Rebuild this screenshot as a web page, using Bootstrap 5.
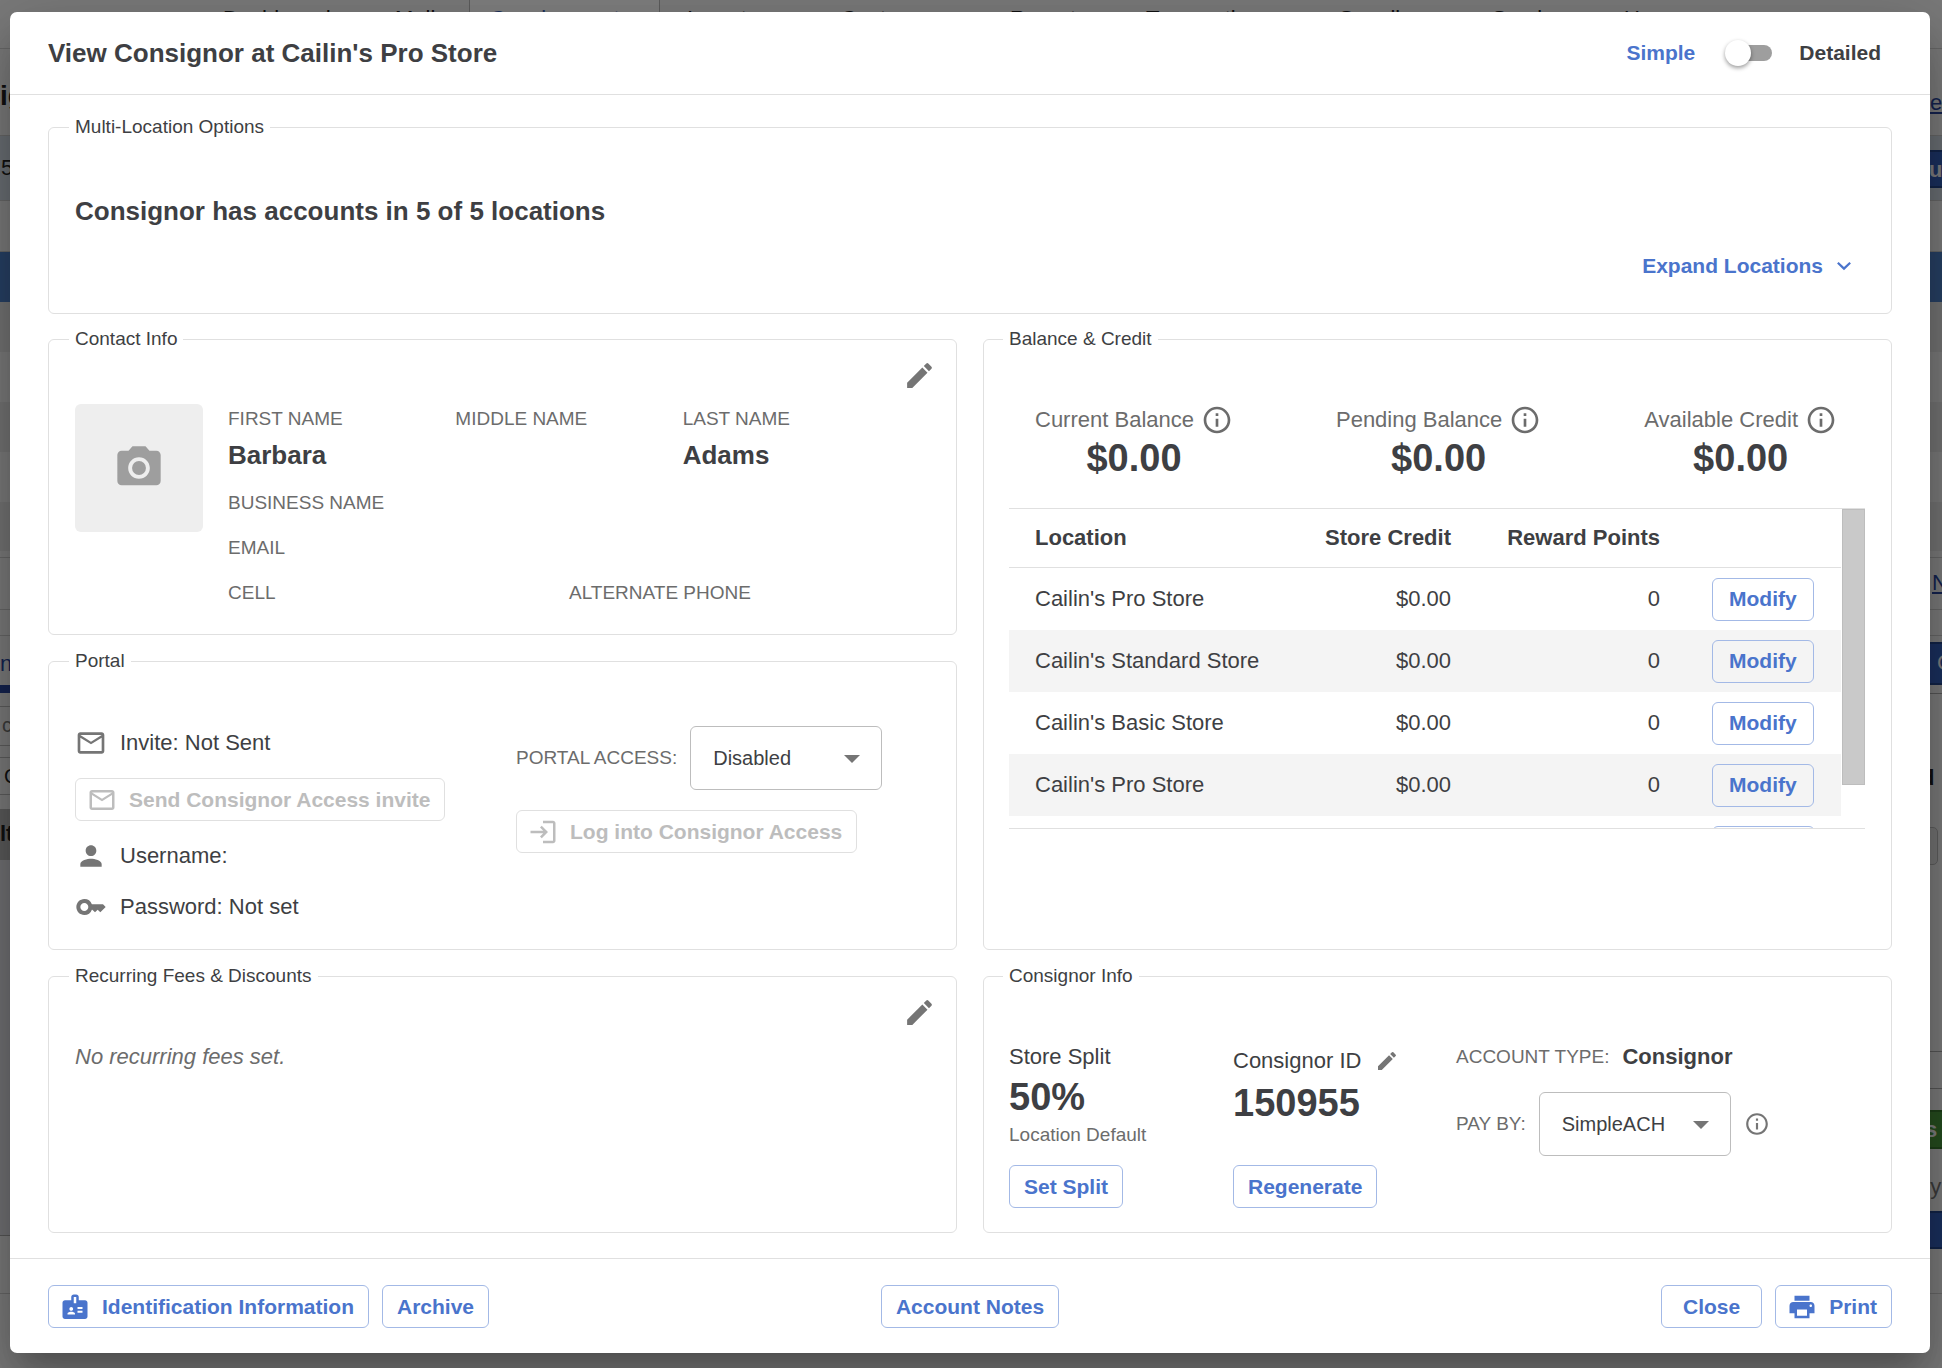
<!DOCTYPE html>
<html lang="en">
<head>
<meta charset="utf-8">
<meta name="viewport" content="width=device-width, initial-scale=1">
<title>View Consignor</title>
<link rel="stylesheet" href="https://cdn.jsdelivr.net/npm/bootstrap@5.3.0/dist/css/bootstrap.min.css">
<style>
  :root { --ink: #3e3f43; --soft: #6c6c6c; --icon: #757575; --blue: #4a74cc; --line: #e0e0e0; }
  body { font-family: "Liberation Sans", Arial, sans-serif; font-size: 22px; line-height: 26px; color: var(--ink); background: #f4f4f4; min-height: 100vh; overflow: hidden; }
  svg { fill: currentColor; flex: none; display: block; }

  /* page underneath the dialog */
  .under { position: absolute; inset: 0; overflow: hidden; color: #222; }
  .under-nav { height: 49px; border-bottom: 1px solid #d0d0d0; }
  .under-nav a { color: #222; text-decoration: none; top: 7px; line-height: 24px; }
  .under-nav .tab-on { position: absolute; top: 0; left: 469px; width: 191px; height: 48px; background: #fff; border: 1px solid #bbb; border-top: 0; }
  .under-nav a.on { color: #3d62b8; }
  .band { border-bottom: 1px solid #ccc; }
  .bit { position: absolute; white-space: nowrap; }
  .under-btn { background: #3560bd; border: 2px solid #27498f; width: 60px; }
  .veil { position: absolute; inset: 0; background: rgba(0,0,0,.5); }

  .dialog { position: relative; margin: 12px 12px 15px 10px; background: #fff; border-radius: 7px; box-shadow: 0 18px 24px -11px rgba(0,0,0,.2), 0 38px 60px 5px rgba(0,0,0,.14), 0 14px 74px 13px rgba(0,0,0,.12); }
  .dialog-head { height: 83px; padding: 0 49px 0 38px; border-bottom: 1px solid var(--line); }
  .dialog-head h1, .headline { font-size: 26px; line-height: 32px; font-weight: 700; }
  .dialog-main { padding: 20px 38px 25px; }
  .dialog-foot { padding: 26px 38px 25px; border-top: 1px solid var(--line); }

  .mode { font-size: 21px; font-weight: 700; }
  .mode-on { color: var(--blue); }
  .switch { appearance: none; width: 48px; height: 26px; margin: 0 26px 0 30px; position: relative; background: none; border: 0; }
  .switch::before { content: ""; position: absolute; left: 4px; right: 1px; top: 5px; height: 16px; border-radius: 8px; background: #9e9e9e; }
  .switch::after { content: ""; position: absolute; left: 0; top: 0; width: 26px; height: 26px; border-radius: 50%; background: #fff; box-shadow: 0 2px 4px rgba(0,0,0,.4); }

  .panel { border: 1px solid var(--line); border-radius: 6px; padding: 0 26px; margin: 0; min-width: 0; position: relative; }
  .panel > legend { float: none; width: auto; font-size: 19px; line-height: 24px; margin: 0 0 0 -6px; padding: 0 6px; }
  .panel-r { padding-left: 25px; }
  .locations { height: 199px; }
  .headline { margin: 56px 0 17px; }
  .duo { display: grid; grid-template-columns: minmax(0, 1fr) minmax(0, 1fr); gap: 14px 26px; margin-top: 13px; }
  .stack { display: grid; gap: 14px; }
  .contact { min-height: 308px; }
  .portal { min-height: 301px; }
  .low { min-height: 269px; }
  .inset-top { margin-top: 53px; }

  .btn-line { --bs-btn-color: var(--blue); --bs-btn-border-color: #a3b9e6; --bs-btn-hover-color: #fff; --bs-btn-hover-bg: var(--blue); --bs-btn-disabled-color: #bdbdbd; --bs-btn-disabled-border-color: #e0e0e0; --bs-btn-disabled-opacity: 1;
    --bs-btn-font-size: 21px; --bs-btn-line-height: 26px; --bs-btn-padding-x: 14px; --bs-btn-padding-y: 8px; --bs-btn-border-radius: 6px; font-weight: 700; height: 43px; display: inline-flex; align-items: center; white-space: nowrap; }
  .btn-wide { --bs-btn-padding-x: 21px; }
  .btn-mod { --bs-btn-padding-x: 16px; }
  .btn-expand { --bs-btn-padding-x: 8px; border: 0; }
  .btn-icon { padding-left: 11px; gap: 12px; }
  .bare { border: 0; background: none; padding: 0; color: var(--icon); }
  .corner { position: absolute; right: 20px; top: 8px; }
  .tag { font-size: 19px; color: var(--soft); text-transform: uppercase; }
  .tag-row { margin-top: 19px; }
  .big { font-size: 38px; line-height: 44px; font-weight: 700; color: var(--ink); }
  .who { font-size: 26px; line-height: 31px; font-weight: 700; }
  .names { padding: 2px 20px 0 0; }
  .photo { width: 128px; height: 128px; background: #eee; color: #9e9e9e; border-radius: 6px; flex: none; }
  .state { display: flex; align-items: center; gap: 13px; height: 34px; }
  .state svg { color: var(--icon); }
  .pick { appearance: none; width: 192px; height: 64px; border: 1px solid #bdbdbd; border-radius: 6px; font-size: 20px; color: var(--ink); padding: 0 22px; background: none; }
  .pick-box { position: relative; }
  .pick-box svg { position: absolute; right: 22px; top: 29px; color: var(--icon); pointer-events: none; }

  .balances { padding: 0 28px 0 26px; color: var(--soft); }
  .balances .cap { display: flex; align-items: center; gap: 7px; height: 32px; }
  .credit-list { height: 321px; margin-top: 28px; overflow: hidden; border-top: 1px solid var(--line); border-bottom: 1px solid var(--line); display: flex; }
  .credit-list table { flex: 1; height: max-content; margin: 0; color: var(--ink); border-collapse: separate; border-spacing: 0; table-layout: fixed; }
  .credit-list th, .credit-list td { padding: 0 26px; }
  .credit-list thead th { height: 59px; border-bottom: 1px solid var(--line); }
  .credit-list td { height: 62px; }
  .credit-list td .btn { vertical-align: middle; }
  .credit-list tbody tr:nth-child(even) { background: #f4f4f4; }
  .bar-track { width: 24px; padding-left: 1px; flex: none; }
  .bar-thumb { height: 276px; background: #c9c9c9; border: 1px solid #bdbdbd; }
  .info-cols { display: grid; grid-template-columns: 224px 223px 1fr; margin-top: 56px; }
</style>
</head>
<body>
<div class="under" aria-hidden="true">
  <div class="under-nav">
    <span class="tab-on"></span>
    <a class="bit" style="left:223px">Dashboard</a><a class="bit" style="left:395px">Mall</a><a class="bit on" style="left:490px">Consignment</a><a class="bit" style="left:687px">Inventory</a><a class="bit" style="left:841px">Customers</a><a class="bit" style="left:1010px">Reports</a><a class="bit" style="left:1146px">Transactions</a><a class="bit" style="left:1339px">Supplies</a><a class="bit" style="left:1492px">Services</a><a class="bit" style="left:1624px">Users</a>
  </div>
  <div class="band" style="height:87px"></div>
  <div class="band" style="height:65px;background:#d3dce6"></div>
  <div class="band" style="height:51px"></div>
  <div style="height:50px;background:#4f80c9"></div>
  <div style="height:50px;background:#e6e6e6"></div>
  <div style="height:50px"></div>
  <div style="height:50px;background:#e6e6e6"></div>
  <div style="height:50px"></div>
  <div style="height:49px;background:#e6e6e6"></div>
  <div class="band" style="height:7px"></div>
  <div class="band" style="height:52px"></div>
  <div class="band" style="height:26px"></div>
  <div style="height:601px"></div>
  <div class="band" style="height:57px"></div>
  <b class="bit" style="left:0;top:83px;font-size:28px">ig</b>
  <span class="bit" style="left:1px;top:155px">5</span>
  <span class="bit" style="left:0;top:651px;color:#2a479f">n</span>
  <div class="bit" style="left:0;top:685px;width:30px;height:8px;background:#2a479f"></div>
  <div class="bit" style="left:0;top:706px;width:30px;height:40px;border:1px solid #bbb;border-left:0"></div>
  <span class="bit" style="left:2px;top:712px;font-size:20px;color:#777">c</span>
  <div class="bit" style="left:0;top:757px;width:30px;height:38px;border:1px solid #bbb;border-left:0"></div>
  <span class="bit" style="left:4px;top:763px;font-size:20px">C</span>
  <div class="bit" style="left:0;top:809px;width:30px;height:51px;background:#b5b5b5"></div>
  <div class="bit" style="left:0;top:860px;width:30px;height:376px;background:#e0e0e6;border-bottom:1px solid #aaa"></div>
  <b class="bit" style="left:0;top:821px">lt</b>
  <u class="bit" style="left:1930px;top:90px;color:#2a479f">e</u>
  <div class="bit under-btn" style="left:1900px;top:150px;height:38px"></div>
  <b class="bit text-light" style="left:1929px;top:157px">u</b>
  <u class="bit" style="left:1932px;top:570px;color:#2a479f">N</u>
  <div class="bit under-btn" style="left:1900px;top:642px;height:43px"></div>
  <span class="bit text-light" style="left:1937px;top:650px">C</span>
  <div class="bit" style="left:1900px;top:693px;width:60px;height:1px;background:#aaa"></div>
  <b class="bit" style="left:1921px;top:765px">d</b>
  <div class="bit" style="left:1900px;top:827px;width:38px;height:38px;border:1px solid #bbb;border-radius:5px;background:#e6e6e6"></div>
  <div class="bit" style="left:1900px;top:1051px;width:60px;height:38px;border:1px solid #aaa"></div>
  <div class="bit" style="left:1900px;top:1110px;width:60px;height:39px;background:#4c9a3e;border:2px solid #3b7a30"></div>
  <b class="bit text-light" style="left:1925px;top:1117px">s</b>
  <span class="bit" style="left:1923px;top:1174px;color:#777">ry</span>
  <div class="bit under-btn" style="left:1900px;top:1211px;height:38px"></div>
</div>
<div class="veil"></div>

<svg width="0" height="0" class="position-absolute">
  <symbol id="pen" viewBox="0 0 24 24"><path d="M3 17.250V21h3.750L17.810 9.940l-3.750-3.750L3 17.250zM20.710 7.040c.39-.39.39-1.020 0-1.410l-2.340-2.340a1 1 0 0 0-1.410 0l-1.830 1.830 3.750 3.750 1.830-1.830z"/></symbol>
  <symbol id="about" viewBox="0 0 24 24"><path d="M11 7h2v2h-2zm0 4h2v6h-2zm1-9C6.480 2 2 6.480 2 12s4.480 10 10 10 10-4.480 10-10S17.520 2 12 2zm0 18c-4.410 0-8-3.590-8-8s3.590-8 8-8 8 3.590 8 8-3.590 8-8 8z"/></symbol>
  <symbol id="mail" viewBox="0 0 24 24"><path d="M20 4H4c-1.100 0-2 .9-2 2v12c0 1.100.9 2 2 2h16c1.100 0 2-.9 2-2V6c0-1.100-.9-2-2-2zm0 14H4V8l8 5 8-5v10zm-8-7L4 6h16l-8 5z"/></symbol>
</svg>

<main class="dialog" role="dialog" aria-labelledby="ttl">
  <header class="dialog-head d-flex align-items-center">
    <h1 id="ttl" class="m-0 me-auto">View Consignor at Cailin's Pro Store</h1>
    <label class="mode d-flex align-items-center"><span class="mode-on">Simple</span><input type="checkbox" role="switch" class="switch" aria-label="Detailed view"><span>Detailed</span></label>
  </header>

  <div class="dialog-main">
    <fieldset class="panel locations">
      <legend>Multi-Location Options</legend>
      <h2 class="headline">Consignor has accounts in 5 of 5 locations</h2>
      <div class="d-flex justify-content-end">
        <button type="button" class="btn btn-line btn-expand">Expand Locations
          <svg class="ms-2" width="26" height="26" viewBox="0 0 24 24"><path d="M17 8.200 12 13 7 8.200 5.600 9.600l6.400 6.400 6.400-6.400z"/></svg></button>
      </div>
    </fieldset>

    <div class="duo">
      <div class="stack">
        <fieldset class="panel contact">
          <legend>Contact Info</legend>
          <button type="button" class="bare corner" aria-label="Edit contact info"><svg width="33" height="33"><use href="#pen"/></svg></button>
          <div class="d-flex inset-top" style="gap:25px">
            <div class="photo d-flex align-items-center justify-content-center"><svg width="52" height="52" viewBox="0 0 24 24"><circle cx="12" cy="12" r="3.2"/><path d="M9 2 7.170 4H4c-1.100 0-2 .9-2 2v12c0 1.100.9 2 2 2h16c1.100 0 2-.9 2-2V6c0-1.100-.9-2-2-2h-3.170L15 2H9zm3 15c-2.760 0-5-2.240-5-5s2.240-5 5-5 5 2.240 5 5-2.240 5-5 5z"/></svg></div>
            <div class="flex-grow-1 names">
              <div class="row g-0">
                <div class="col-4"><div class="tag">First Name</div><div class="who mt-2">Barbara</div></div>
                <div class="col-4"><div class="tag">Middle Name</div></div>
                <div class="col-4"><div class="tag">Last Name</div><div class="who mt-2">Adams</div></div>
              </div>
              <div class="tag tag-row">Business Name</div>
              <div class="tag tag-row">Email</div>
              <div class="row g-0 tag-row">
                <div class="col-6 tag">Cell</div><div class="col-6 tag">Alternate Phone</div>
              </div>
            </div>
          </div>
        </fieldset>

        <fieldset class="panel portal">
          <legend>Portal</legend>
          <div class="d-flex inset-top">
            <div style="width:441px">
              <div class="state"><svg width="32" height="32"><use href="#mail"/></svg>Invite: Not Sent</div>
              <button type="button" class="btn btn-line btn-icon" style="margin:18px 0" disabled><svg width="30" height="30"><use href="#mail"/></svg><span>Send Consignor Access invite</span></button>
              <div class="state"><svg width="32" height="32" viewBox="0 0 24 24"><path d="M12 12c2.210 0 4-1.790 4-4s-1.790-4-4-4-4 1.790-4 4 1.790 4 4 4zm0 2c-2.670 0-8 1.340-8 4v2h16v-2c0-2.660-5.330-4-8-4z"/></svg>Username:</div>
              <div class="state" style="margin-top:17px"><svg width="32" height="32" viewBox="0 0 24 24"><path d="M21 10h-8.350A5.990 5.990 0 0 0 7 6c-3.310 0-6 2.690-6 6s2.690 6 6 6a5.990 5.990 0 0 0 5.650-4H13l2 2 2-2 2 2 4-4.040L21 10zM7 15c-1.650 0-3-1.350-3-3s1.350-3 3-3 3 1.350 3 3-1.350 3-3 3z"/></svg>Password: Not set</div>
            </div>
            <div>
              <div class="d-flex align-items-center" style="gap:13px"><label class="tag" for="acc">Portal Access:</label>
                <div class="pick-box"><select id="acc" class="pick"><option>Disabled</option></select><svg width="16" height="8" viewBox="0 0 16 8"><path d="M0 0h16L8 8z"/></svg></div></div>
              <button type="button" class="btn btn-line btn-icon" style="margin-top:20px" disabled><svg width="30" height="30" viewBox="0 0 24 24"><path d="M11 7 9.600 8.400l2.600 2.600H2v2h10.200l-2.600 2.600L11 17l5-5-5-5zm9 12h-8v2h8c1.100 0 2-.9 2-2V5c0-1.100-.9-2-2-2h-8v2h8v14z"/></svg><span>Log into Consignor Access</span></button>
            </div>
          </div>
        </fieldset>
      </div>

      <fieldset class="panel panel-r">
        <legend>Balance &amp; Credit</legend>
        <div class="d-flex justify-content-between balances inset-top">
          <div class="text-center"><div class="cap">Current Balance<svg width="32" height="32"><use href="#about"/></svg></div><div class="big">$0.00</div></div>
          <div class="text-center"><div class="cap">Pending Balance<svg width="32" height="32"><use href="#about"/></svg></div><div class="big">$0.00</div></div>
          <div class="text-center"><div class="cap">Available Credit<svg width="32" height="32"><use href="#about"/></svg></div><div class="big">$0.00</div></div>
        </div>
        <div class="credit-list">
          <table>
            <colgroup><col><col style="width:190px"><col style="width:209px"><col style="width:155px"></colgroup>
            <thead><tr><th>Location</th><th class="text-end text-nowrap">Store Credit</th><th class="text-end text-nowrap">Reward Points</th><th></th></tr></thead>
            <tbody>
              <tr><td>Cailin's Pro Store</td><td class="text-end">$0.00</td><td class="text-end">0</td><td><button type="button" class="btn btn-line btn-mod">Modify</button></td></tr>
              <tr><td>Cailin's Standard Store</td><td class="text-end">$0.00</td><td class="text-end">0</td><td><button type="button" class="btn btn-line btn-mod">Modify</button></td></tr>
              <tr><td>Cailin's Basic Store</td><td class="text-end">$0.00</td><td class="text-end">0</td><td><button type="button" class="btn btn-line btn-mod">Modify</button></td></tr>
              <tr><td>Cailin's Pro Store</td><td class="text-end">$0.00</td><td class="text-end">0</td><td><button type="button" class="btn btn-line btn-mod">Modify</button></td></tr>
              <tr><td></td><td></td><td></td><td><button type="button" class="btn btn-line btn-mod w-100" aria-label="Modify"></button></td></tr>
            </tbody>
          </table>
          <div class="bar-track"><div class="bar-thumb"></div></div>
        </div>
      </fieldset>

      <fieldset class="panel low">
        <legend>Recurring Fees &amp; Discounts</legend>
        <button type="button" class="bare corner" aria-label="Edit recurring fees"><svg width="33" height="33"><use href="#pen"/></svg></button>
        <p class="fst-italic m-0" style="padding-top:56px;color:var(--soft)">No recurring fees set.</p>
      </fieldset>

      <fieldset class="panel panel-r low">
        <legend>Consignor Info</legend>
        <div class="info-cols">
          <div class="d-flex flex-column align-items-start">
            <div>Store Split</div><div class="big" style="margin-top:5px">50%</div>
            <div style="font-size:19px;color:var(--soft);margin:3px 0 17px">Location Default</div>
            <button type="button" class="btn btn-line">Set Split</button>
          </div>
          <div class="d-flex flex-column align-items-start">
            <div class="d-flex align-items-center" style="height:34px;gap:14px">Consignor ID <button type="button" class="bare" aria-label="Edit consignor ID"><svg width="24" height="24"><use href="#pen"/></svg></button></div>
            <div class="big" style="margin-top:3px">150955</div>
            <button type="button" class="btn btn-line mt-auto">Regenerate</button>
          </div>
          <div>
            <div class="d-flex align-items-center" style="gap:13px"><span class="tag">Account Type:</span><b>Consignor</b></div>
            <div class="d-flex align-items-center" style="gap:13px;margin-top:22px"><label class="tag" for="pay">Pay By:</label>
              <div class="pick-box"><select id="pay" class="pick"><option>SimpleACH</option></select><svg width="16" height="8" viewBox="0 0 16 8"><path d="M0 0h16L8 8z"/></svg></div>
              <svg width="26" height="26" style="color:var(--icon)"><use href="#about"/></svg></div>
          </div>
        </div>
      </fieldset>
    </div>
  </div>

  <footer class="dialog-foot row g-0">
    <div class="col d-flex" style="gap:13px">
      <button type="button" class="btn btn-line btn-icon"><svg width="30" height="30" viewBox="0 0 24 24"><path fill-rule="evenodd" d="M20 6.500h-5V4c0-1.100-.9-2-2-2h-2c-1.100 0-2 .9-2 2v2.500H4c-1.100 0-2 .9-2 2V19.500c0 1.100.9 2 2 2h16c1.100 0 2-.9 2-2V8.500c0-1.100-.9-2-2-2zM9 12c.83 0 1.500.67 1.500 1.500S9.830 15 9 15s-1.500-.67-1.500-1.500S8.170 12 9 12zm3 6H6v-.75c0-1 2-1.500 3-1.500s3 .5 3 1.500V18zm1-9h-2V4h2v5zm5 7.500h-4V15h4v1.500zm0-3h-4V12h4v1.500z"/></svg><span>Identification Information</span></button>
      <button type="button" class="btn btn-line">Archive</button>
    </div>
    <div class="col-auto"><button type="button" class="btn btn-line">Account Notes</button></div>
    <div class="col d-flex justify-content-end" style="gap:13px">
      <button type="button" class="btn btn-line btn-wide">Close</button>
      <button type="button" class="btn btn-line btn-icon"><svg width="30" height="30" viewBox="0 0 24 24"><path d="M19 8H5c-1.660 0-3 1.340-3 3v6h4v4h12v-4h4v-6c0-1.660-1.340-3-3-3zm-3 11H8v-5h8v5zm3-7c-.55 0-1-.45-1-1s.45-1 1-1 1 .45 1 1-.45 1-1 1zm-1-9H6v4h12V3z"/></svg><span>Print</span></button>
    </div>
  </footer>
</main>
<script src="https://cdn.jsdelivr.net/npm/bootstrap@5.3.0/dist/js/bootstrap.bundle.min.js"></script>
</body>
</html>
